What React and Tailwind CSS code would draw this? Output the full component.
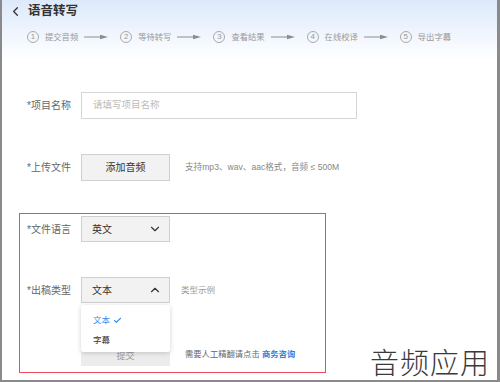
import React from "react";
import { ChevronDown, ChevronUp, ChevronLeft, Check } from "lucide-react";

const font = { fontFamily: '"Liberation Sans", "Noto Sans CJK SC", sans-serif' };

const steps = ["提交音频", "等待转写", "查看结果", "在线校译", "导出字幕"];

function Arrow() {
  return (
    <svg width="24" height="6" viewBox="0 0 24 6" className="shrink-0">
      <line x1="0" y1="3" x2="18" y2="3" stroke="#8c8c8c" strokeWidth="1" />
      <polygon points="16,0.8 24,3 16,5.2" fill="#8c8c8c" />
    </svg>
  );
}

function Label({ children }) {
  return <div className="w-[54px] shrink-0 text-[10px] text-[#666] whitespace-nowrap">*{children}</div>;
}

function Select({ value, open }) {
  return (
    <div className="w-[89px] h-[26px] shrink-0 bg-[#f2f2f2] border border-[#cfcfcf] flex items-center justify-between pl-[10px] pr-[7px] text-[10px] text-[#333]">
      <span>{value}</span>
      {open ? <ChevronUp size={14} strokeWidth={2} color="#333" /> : <ChevronDown size={14} strokeWidth={2} color="#333" />}
    </div>
  );
}

export default function App() {
  return (
    <div className="w-[500px] h-[382px] bg-white border-l-2 border-r-[3px] border-b-2 border-[#8a8a8a] relative overflow-hidden" style={font}>
      <div className="bg-gradient-to-b from-[#dde9fb] to-white h-[60px]">
        <div className="flex items-center h-[22px] pl-[6px]">
          <ChevronLeft size={15} strokeWidth={2} color="#333" />
          <span className="ml-[5px] text-[12.5px] font-bold text-[#333]">语音转写</span>
        </div>
        <div className="flex items-center mt-[8px] pl-[25px] h-[14px] whitespace-nowrap">
          {steps.map((s, i) => (
            <div key={s} className="flex items-center shrink-0">
              <div className="w-[12px] h-[12px] rounded-full border border-[#aaa] text-[8px] text-[#999] flex items-center justify-center leading-none">
                {i + 1}
              </div>
              <span className="ml-[6px] text-[8.3px] text-[#999]">{s}</span>
              {i < steps.length - 1 && (
                <div className="flex items-center ml-[6px] mr-[12px]">
                  <Arrow />
                </div>
              )}
            </div>
          ))}
        </div>
      </div>

      <div className="ml-[17px] mt-[32px] w-[307px]">
        <div className="flex items-center pl-[8px]">
          <Label>项目名称</Label>
          <div className="w-[276px] h-[27px] shrink-0 border border-[#d6d6d6] flex items-center pl-[11px] text-[9.5px] text-[#bbb]">
            请填写项目名称
          </div>
        </div>

        <div className="flex items-center pl-[8px] mt-[35px] whitespace-nowrap">
          <Label>上传文件</Label>
          <div className="w-[89px] h-[27px] shrink-0 bg-[#f2f2f2] border border-[#cfcfcf] flex items-center justify-center text-[10px] text-[#333]">
            添加音频
          </div>
          <span className="ml-[15px] text-[8.6px] text-[#888]">支持mp3、wav、aac格式，音频 ≤ 500M</span>
        </div>

        <div className="mt-[32px] border border-[#ef4a5e] pl-[7px] pt-[2px] h-[160px] whitespace-nowrap">
          <div className="flex items-center">
            <Label>文件语言</Label>
            <Select value="英文" />
          </div>
          <div className="flex items-center mt-[35px] relative">
            <Label>出稿类型</Label>
            <Select value="文本" open />
            <span className="ml-[11px] text-[8.5px] text-[#999]">类型示例</span>
            <div className="absolute left-[54px] top-[28px] w-[89px] h-[47px] bg-white shadow-[0_1px_5px_rgba(0,0,0,0.18)] rounded-[2px] z-10 flex flex-col pl-[12px] pt-[9px] text-[8.5px]">
              <div className="flex items-center text-[#3d8ef0] h-[12px]">
                文本
                <Check size={9} strokeWidth={3} color="#3d8ef0" className="ml-[3px]" />
              </div>
              <div className="text-[#333] mt-[8px] h-[12px]">字幕</div>
            </div>
          </div>
          <div className="flex items-center mt-[39px]">
            <div className="w-[54px] shrink-0" />
            <div className="w-[89px] h-[24px] shrink-0 bg-[#ececec] flex items-end justify-center text-[9px] text-[#999] pb-[3px]">提交</div>
            <span className="ml-[15px] text-[8.3px] text-[#666]">
              需要人工精翻请点击 <span className="text-[#2f7fe0] font-bold">商务咨询</span>
            </span>
          </div>
        </div>
      </div>

      <div className="absolute right-[7px] bottom-[4px] text-[29px] text-[#3a3a3a] font-light leading-none tracking-[1px]" style={{ fontFamily: '"Noto Sans CJK SC", sans-serif' }}>
        音频应用
      </div>
    </div>
  );
}
